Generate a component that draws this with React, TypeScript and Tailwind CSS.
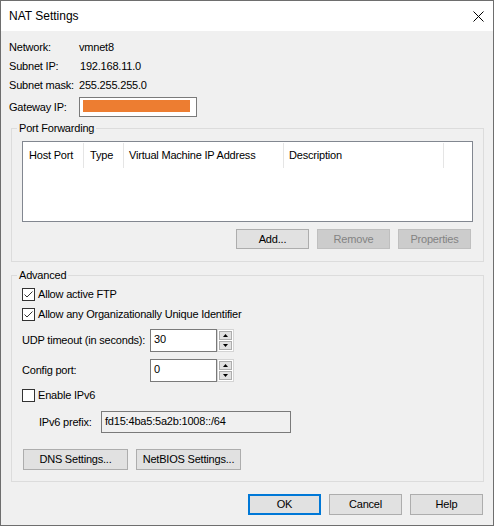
const winFont = "font-['Liberation_Sans',Arial,sans-serif]";

function Button({
  label,
  className = "",
  disabled = false,
  primary = false,
}: {
  label: string;
  className?: string;
  disabled?: boolean;
  primary?: boolean;
}) {
  const border = primary
    ? "border-2 border-[#0078d7]"
    : disabled
      ? "border border-[#bfbfbf]"
      : "border border-[#adadad]";
  const fill = disabled ? "bg-[#cccccc] text-[#838383]" : "bg-[#e1e1e1] text-black";
  return (
    <div className={`flex items-center justify-center ${border} ${fill} ${className}`}>
      {label}
    </div>
  );
}

function Checkbox({ checked, label, className = "" }: { checked: boolean; label: string; className?: string }) {
  return (
    <div className={`flex h-[13px] items-center ${className}`}>
      <div className="flex h-[13px] w-[13px] items-center justify-center border border-[#333333] bg-white">
        {checked && (
          <svg width="11" height="11" viewBox="0 0 11 11">
            <path d="M1.5 5.5 L4 8 L9.5 2.5" fill="none" stroke="#333333" strokeWidth="1" />
          </svg>
        )}
      </div>
      <span className="ml-[3px]">{label}</span>
    </div>
  );
}

function Spinner() {
  return (
    <div className="flex h-[23px] w-[17px] flex-col gap-[1px] border border-[#d4d4d4] bg-white p-[1px]">
      <div className="flex flex-1 items-center justify-center border border-[#adadad] bg-[#e1e1e1]">
        <svg width="5" height="3" viewBox="0 0 5 3">
          <path d="M0 3 L2.5 0 L5 3Z" fill="#000" />
        </svg>
      </div>
      <div className="flex flex-1 items-center justify-center border border-[#adadad] bg-[#e1e1e1]">
        <svg width="5" height="3" viewBox="0 0 5 3">
          <path d="M0 0 L2.5 3 L5 0Z" fill="#000" />
        </svg>
      </div>
    </div>
  );
}

function NumberField({ label, value, className = "" }: { label: string; value: string; className?: string }) {
  return (
    <div className={`flex items-center ${className}`}>
      <span className="w-[128px]">{label}</span>
      <div className="flex h-[23px] w-[67px] items-center border border-[#7a7a7a] bg-white pb-[2px] pl-[3px]">
        {value}
      </div>
      <Spinner />
    </div>
  );
}

export default function App() {
  return (
    <div
      className={`flex h-[526px] w-[494px] flex-col border border-[#6e6e6e] bg-[#f0f0f0] text-[11px] tracking-[-0.2px] text-black ${winFont}`}
    >
      {/* title bar */}
      <div className="flex h-[30px] shrink-0 items-center justify-between bg-white pl-[8px] pr-[9px]">
        <span className="text-[12px] tracking-normal">NAT Settings</span>
        <svg width="11" height="11" viewBox="0 0 11 11">
          <path d="M0.5 0.5 L10.5 10.5 M10.5 0.5 L0.5 10.5" stroke="#000" strokeWidth="1" />
        </svg>
      </div>

      <div className="flex flex-1 flex-col pl-[8px] pr-[10px] pt-[7px]">
        {/* network info */}
        <div className="flex h-[19px] items-center">
          <span className="w-[70px]">Network:</span>
          <span>vmnet8</span>
        </div>
        <div className="flex h-[19px] items-center">
          <span className="w-[70px]">Subnet IP:</span>
          <span className="ml-[1px]">192.168.11.0</span>
        </div>
        <div className="flex h-[19px] items-center">
          <span className="w-[70px]">Subnet mask:</span>
          <span>255.255.255.0</span>
        </div>
        <div className="mt-[2px] flex h-[20px] items-center">
          <span className="w-[70px]">Gateway IP:</span>
          <div className="h-[20px] w-[118px] border border-[#7a7a7a] bg-white pl-[3px] pt-[2px]">
            <div className="h-[12px] w-[107px] bg-[#ed7d31]" />
          </div>
        </div>

        {/* port forwarding */}
        <fieldset className="ml-[2px] mt-[4px] w-[473px] border border-[#dcdcdc]">
          <legend className="ml-[5px] h-[15px] px-[2px] leading-[15px]">Port Forwarding</legend>
          <div className="flex flex-col pb-[12px] pl-[10px] pt-[5px]">
            <div className="h-[81px] w-[451px] border border-[#828790] bg-white">
              <div className="flex h-[26px] pt-[1px]">
                <div className="flex h-[25px] w-[61px] items-center border-r border-[#e5e5e5] pl-[6px]">Host Port</div>
                <div className="flex h-[25px] w-[40px] items-center border-r border-[#e5e5e5] pl-[6px]">Type</div>
                <div className="flex h-[25px] w-[160px] items-center border-r border-[#e5e5e5] pl-[5px]">
                  Virtual Machine IP Address
                </div>
                <div className="flex h-[25px] w-[160px] items-center border-r border-[#e5e5e5] pl-[5px]">Description</div>
              </div>
            </div>
            <div className="mt-[7px] flex w-[449px] justify-end gap-[8px]">
              <Button label="Add..." className="h-[20px] w-[73px]" />
              <Button label="Remove" disabled className="h-[20px] w-[73px]" />
              <Button label="Properties" disabled className="h-[20px] w-[73px]" />
            </div>
          </div>
        </fieldset>

        {/* advanced */}
        <fieldset className="ml-[2px] mt-[6px] w-[473px] border border-[#dcdcdc]">
          <legend className="ml-[5px] h-[15px] px-[2px] leading-[15px]">Advanced</legend>
          <div className="flex flex-col pb-[11px] pl-[10px] pt-[5px]">
            <Checkbox checked label="Allow active FTP" />
            <Checkbox checked label="Allow any Organizationally Unique Identifier" className="mt-[7px]" />
            <NumberField label="UDP timeout (in seconds):" value="30" className="mt-[8px]" />
            <NumberField label="Config port:" value="0" className="mt-[7px]" />
            <Checkbox checked={false} label="Enable IPv6" className="mt-[7px]" />
            <div className="ml-[17px] mt-[9px] flex items-center">
              <span className="w-[62px]">IPv6 prefix:</span>
              <div className="flex h-[22px] w-[190px] items-center border border-[#7a7a7a] bg-[#f0f0f0] pb-[1px] pl-[3px]">
                fd15:4ba5:5a2b:1008::/64
              </div>
            </div>
            <div className="ml-[1px] mt-[16px] flex gap-[8px]">
              <Button label="DNS Settings..." className="h-[21px] w-[105px]" />
              <Button label="NetBIOS Settings..." className="h-[21px] w-[105px]" />
            </div>
          </div>
        </fieldset>

        {/* dialog buttons */}
        <div className="mt-[12px] flex justify-end gap-[8px]">
          <Button label="OK" primary className="h-[21px] w-[73px]" />
          <Button label="Cancel" className="h-[21px] w-[73px]" />
          <Button label="Help" className="h-[21px] w-[73px]" />
        </div>
      </div>
    </div>
  );
}
